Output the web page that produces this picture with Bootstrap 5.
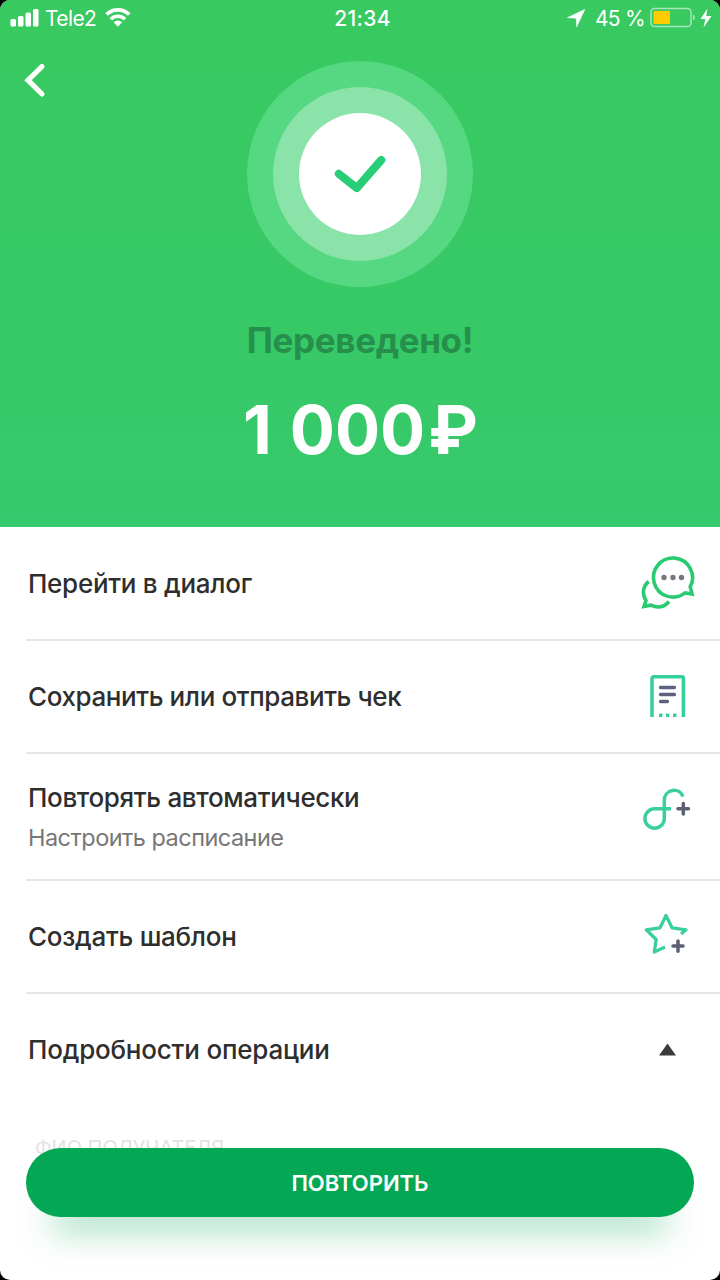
<!DOCTYPE html>
<html lang="ru">
<head>
<meta charset="utf-8">
<meta name="viewport" content="width=device-width, initial-scale=1">
<title>Переведено</title>
<link rel="stylesheet" href="https://cdn.jsdelivr.net/npm/bootstrap@5.3.0/dist/css/bootstrap.min.css">
<style>
  html, body { height: 100%; margin: 0; background: #000; }
  body { font-family: Inter, "Noto Sans", sans-serif; color: #2e2e2e; }
  .screen { width: 720px; height: 1280px; background: #fff; border-radius: 10px; }
  .hero { height: 527px; background: linear-gradient(#38c960, #37c968 75%, #36c96d); }
  .status { height: 38px; font-size: 21px; line-height: 38px; }
  .status > * { flex: 1 1 0; }
  .carrier { letter-spacing: -.6px; }
  .clock { font-weight: 500; letter-spacing: .3px; padding-left: 5px; }
  .percent { letter-spacing: -.7px; }
  .back { width: 48px; height: 48px; top: 56px; left: 12px; }
  .rings { width: 226px; height: 226px; margin-top: 23px; }
  .status-title { font-size: 35px; font-weight: 700; line-height: 44px; margin-top: 31px; color: #258f4b; letter-spacing: -.35px; }
  .amount { font-size: 67px; font-weight: 700; line-height: 80px; margin-top: 28px; word-spacing: 2px; }
  .ruble { margin-left: 3px; letter-spacing: -1px; }
  .actions { padding-top: 1px; }
  .line { margin-left: 26px; padding-left: 2px; height: 113px; border-bottom: 2px solid #e7e7e9; font-size: 26px; font-weight: 500; line-height: 34px; letter-spacing: -.27px; }
  .line.tight { letter-spacing: -.4px; }
  .line.tall { height: 127px; letter-spacing: -.34px; }
  .line.last { border: 0; height: 111px; letter-spacing: -.2px; }
  .line svg { width: 100px; height: 90px; flex: none; }
  .hint { font-size: 23.5px; font-weight: 400; color: #777; line-height: 30px; margin-top: 8px; letter-spacing: -.53px; }
  .field-label { margin-left: 35px; margin-top: 29px; height: 28px; font-size: 20px; line-height: 28px; color: #e2e2e2; }
  .repeat { left: 26px; right: 26px; top: 1148px; height: 69px; padding-top: 8px; background: #04a753; color: #fff; font-size: 22px; font-weight: 600; box-shadow: 0 36px 34px -25px rgba(4,167,83,.5); }
</style>
</head>
<body>
<main class="screen position-relative overflow-hidden">
  <header class="hero text-white d-flex flex-column align-items-center position-relative">
    <div class="status d-flex w-100">
      <div class="d-flex">
        <svg width="45" height="38"><g fill="#fff"><rect x="10.500" y="19" width="5.500" height="7.500" rx="1.500"/><rect x="18" y="16" width="5.500" height="10.500" rx="1.500"/><rect x="25.500" y="12.500" width="5.500" height="14" rx="1.500"/><rect x="33" y="9" width="5.500" height="17.500" rx="1.500"/></g></svg>
        <span class="carrier">Tele2</span>
        <svg width="40" height="38" viewBox="96.500 0 40 38"><g fill="none" stroke="#fff" stroke-width="3.600"><path d="M107 14.600a16 16 0 0 1 22.800 0"/><path d="M111.300 19.200a10 10 0 0 1 14.200 0"/></g><path d="M114.200 22.300a6 6 0 0 1 8.400 0L118.400 26.800z" fill="#fff"/></svg>
      </div>
      <div class="clock text-center">21:34</div>
      <div class="d-flex justify-content-end">
        <svg width="30" height="38" viewBox="566.500 0 30 38"><path d="M586.300 9.400 578.200 26.800 577.800 18.200 568.800 17.700z" fill="#fff" stroke="#fff" stroke-width=".6"/></svg>
        <span class="percent">45 %</span>
        <svg width="75" height="38" viewBox="645 0 75 38"><rect x="651" y="8.500" width="40" height="18" rx="3.500" fill="none" stroke="#fff" stroke-opacity=".55" stroke-width="1.500"/><rect x="653.500" y="11" width="16.500" height="13" rx="1" fill="#ffcc00"/><path d="M693 14.500q2 .8 2 3t-2 3z" fill="#fff" fill-opacity=".55"/><path d="M707.500 8.500 700.500 19h4.800l-1.800 8.500L711.500 16h-5.200z" fill="#fff"/></svg>
      </div>
    </div>
    <svg class="back position-absolute" viewBox="12 56 48 48"><path d="M42 66.500 28 80.200 42 94" fill="none" stroke="#fff" stroke-width="5.200" stroke-linecap="round"/></svg>
    <svg class="rings" viewBox="-113 -113 226 226"><circle r="113" fill="#55d881"/><circle r="87" fill="#8ae3a9"/><circle r="61" fill="#fff"/><path d="M-21.200-.2-3.200 14 21.300-14" fill="none" stroke="#27ce75" stroke-width="8" stroke-linecap="round" stroke-linejoin="round"/></svg>
    <div class="status-title"><span>Переведено!</span></div>
    <div class="amount"><span>1 000<span class="ruble">₽</span></span></div>
  </header>

  <section class="actions">
    <div class="line d-flex align-items-center justify-content-between">
      <span>Перейти в диалог</span>
      <svg viewBox="0 -1.500 100 90"><g fill="none" stroke="#2acb70" stroke-width="3.600"><path d="M65 52.400A19.500 19.500 0 1 1 70.200 46.200L72 53.500z"/><path d="M28.700 41C22.500 46 22 54 26 60L24 66 31 64.700C37 67.500 44 67.200 49 61"/></g><g fill="#77787f"><circle cx="44" cy="37" r="2.700"/><circle cx="53" cy="37" r="2.700"/><circle cx="61.500" cy="37" r="2.700"/></g></svg>
    </div>
    <div class="line tight d-flex align-items-center justify-content-between">
      <span>Сохранить или отправить чек</span>
      <svg viewBox="0 -8 100 90"><path d="M32 57V18.500a1.700 1.700 0 0 1 1.700-1.700h28a1.700 1.700 0 0 1 1.700 1.700V57" fill="none" stroke="#35cf99" stroke-width="3.500"/><path d="M40.500 27.500h14M40.500 34.500h14M40.500 41.500h7" stroke="#5c6180" stroke-width="3.300" stroke-linecap="round"/><path d="M39 55.300h17.500" stroke="#35cf99" stroke-width="3.400" stroke-dasharray="3.400 3.600"/></svg>
    </div>
    <div class="line tall d-flex align-items-center justify-content-between">
      <div><div>Повторять автоматически</div><div class="hint"><span>Настроить расписание</span></div></div>
      <svg viewBox="0 2.500 100 90"><path d="M51 39.300H34.600A9.700 9.700 0 1 0 44.300 49V30A9.700 9.700 0 0 1 63 27" fill="none" stroke="#3bd09b" stroke-width="3.500"/><path d="M58 39.300h10.500M63.300 34v10.600" stroke="#5c6074" stroke-width="3.500" stroke-linecap="round"/></svg>
    </div>
    <div class="line d-flex align-items-center justify-content-between">
      <span>Создать шаблон</span>
      <svg viewBox="0 2.500 100 90"><path d="M45 57.500 34.300 62.500 36.200 50 26.200 40.300 40 38.300 46 26 52 38.300 66 40.300 61 44.500" fill="none" stroke="#3bd09b" stroke-width="3.300" stroke-linejoin="round"/><path d="M53 56.600h10M58 51.500v10.200" stroke="#5c6074" stroke-width="3.500" stroke-linecap="round"/></svg>
    </div>
    <div class="line last d-flex align-items-center justify-content-between">
      <span>Подробности операции</span>
      <svg viewBox="0 0 100 90"><path d="M39 50.500h17L47.500 38.500z" fill="#3b3b3b"/></svg>
    </div>
    <div class="field-label"><span>ФИО ПОЛУЧАТЕЛЯ</span></div>
  </section>

  <button type="button" class="repeat btn rounded-pill border-0 position-absolute"><span>ПОВТОРИТЬ</span></button>
</main>
<script src="https://cdn.jsdelivr.net/npm/bootstrap@5.3.0/dist/js/bootstrap.bundle.min.js"></script>
</body>
</html>
